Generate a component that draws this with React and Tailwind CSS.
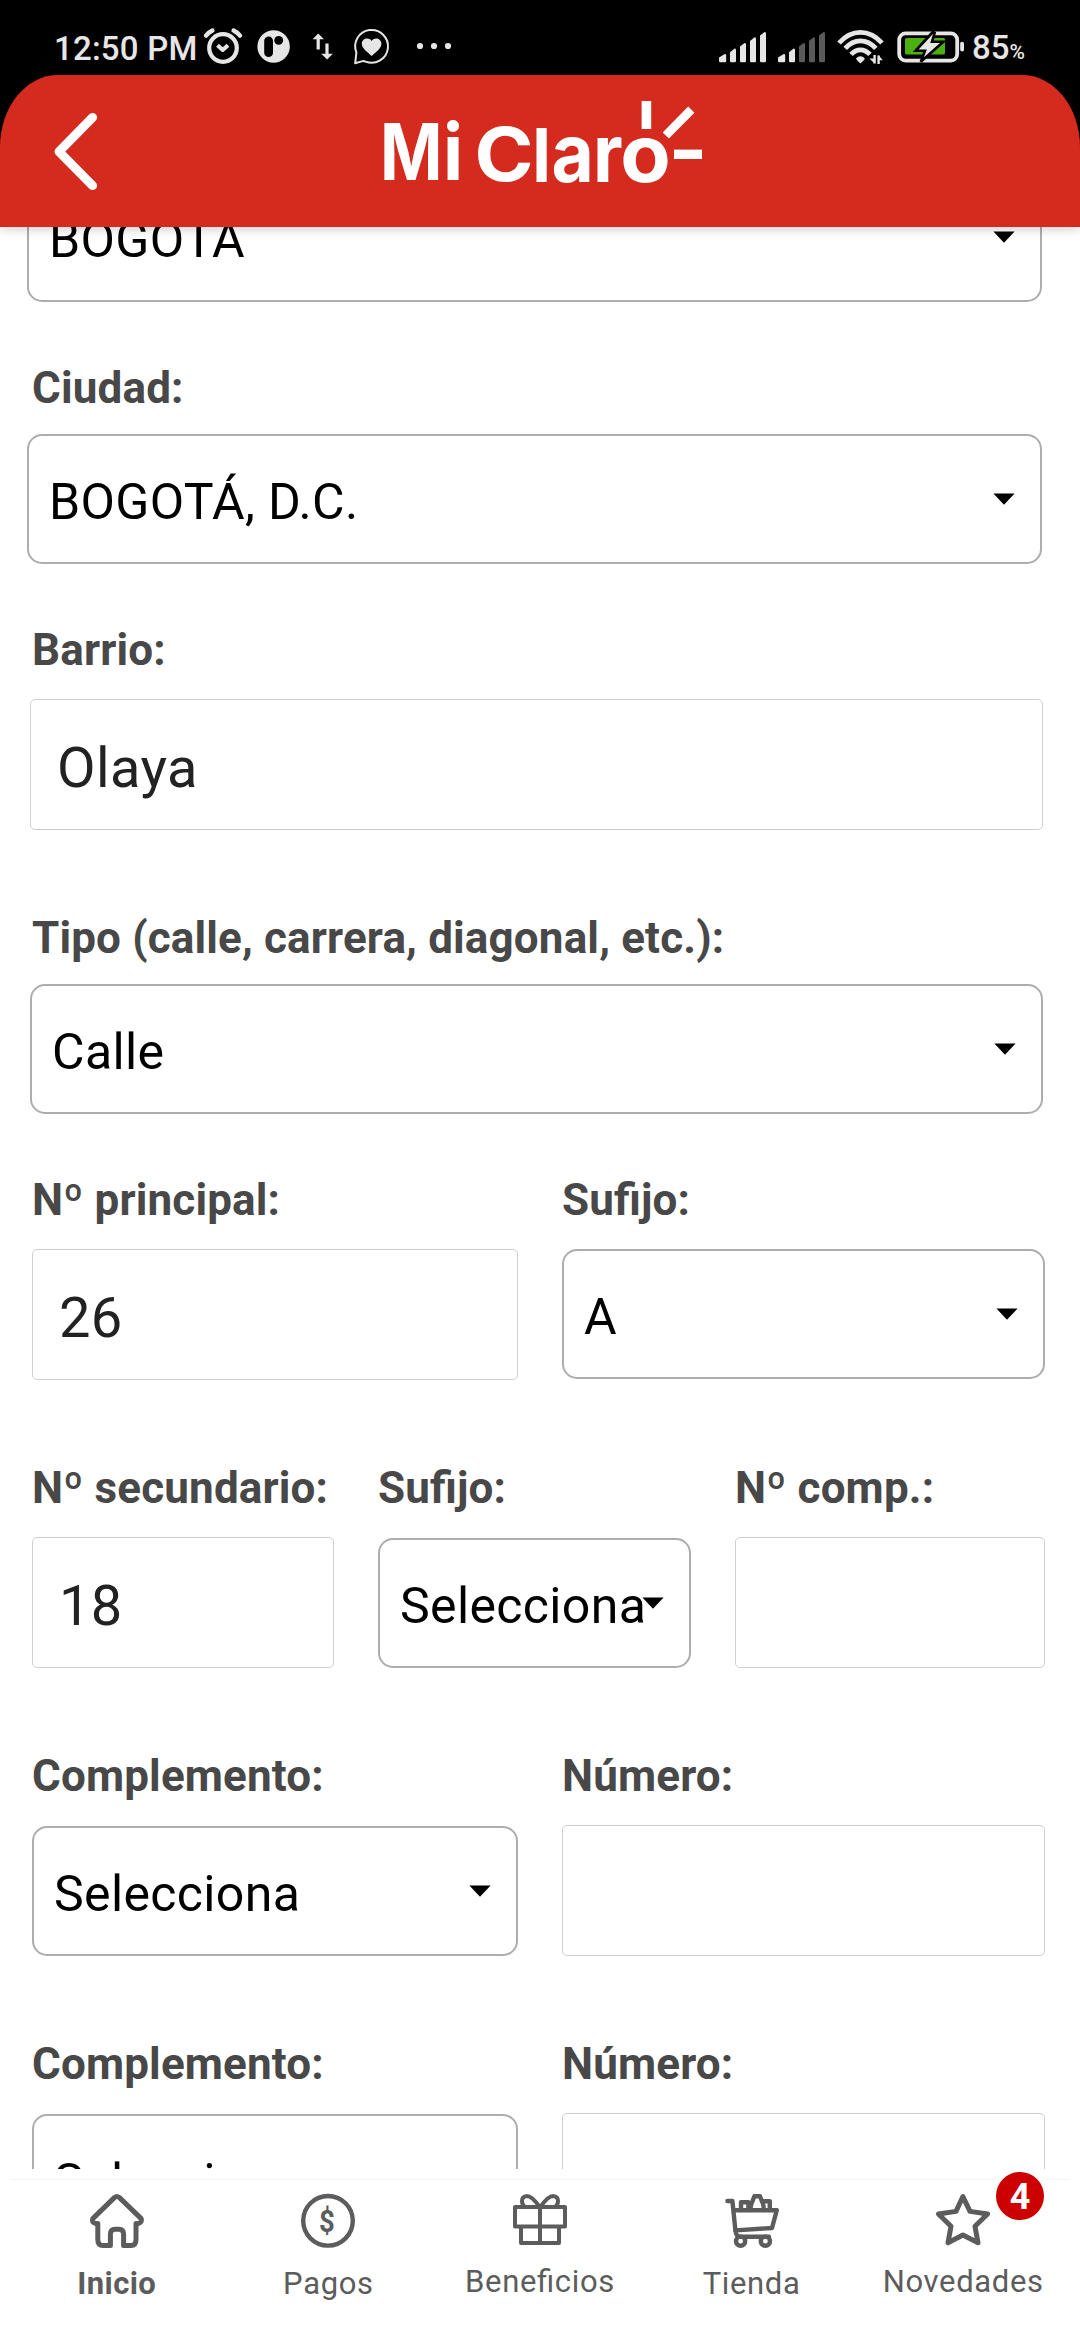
import React from "react";

const GREY = "#5c5c5c";
const LIGHT = "#e6e6e6";

/* ---------- Status bar ---------- */

function AlarmIcon() {
  return (
    <svg width="50" height="75" viewBox="200 0 50 75" fill="none" stroke={LIGHT} strokeLinecap="round">
      <circle cx="223" cy="48" r="13.8" strokeWidth="4.2" />
      <path d="M217.5 45.2 L222.7 50 L228 45.2" strokeWidth="4" strokeLinecap="butt" strokeLinejoin="round" />
      <path d="M206 35.6 Q208.5 32.4 212.4 30.6 M240 35.6 Q237.5 32.4 233.6 30.6" strokeWidth="4.4" />
    </svg>
  );
}

function PIcon() {
  return (
    <svg width="54" height="75" viewBox="250 0 54 75">
      <circle cx="273.6" cy="46.5" r="16.2" fill={LIGHT} />
      <rect x="264.2" y="36.5" width="8.8" height="20.6" rx="4.4" fill="#000" />
      <circle cx="278.7" cy="40.4" r="4.4" fill="#000" />
    </svg>
  );
}

function TransferIcon() {
  return (
    <svg width="40" height="75" viewBox="304 0 40 75" fill={LIGHT}>
      <path d="M318.2 33.4 L324 39.3 H319.8 V49.4 H316.6 V39.3 H312.6 Z" />
      <path d="M327.1 59.6 L321.2 53.8 H325.4 V43.6 H328.6 V53.8 H332.8 Z" />
    </svg>
  );
}

function ChatHeartIcon() {
  return (
    <svg width="60" height="75" viewBox="344 0 60 75">
      <path
        d="M355.2 63.2 L356.4 52.5 A16.4 16.4 0 1 1 365.6 61.6 Q363.4 60.4 361.6 61.4 Z"
        fill="none"
        stroke={LIGHT}
        strokeWidth="2"
        strokeLinejoin="round"
      />
      <path
        d="M371.7 56 C368 52.6 361.8 48.6 361.8 43.8 C361.8 38.6 368.6 36.6 371.7 41 C374.8 36.6 381.4 38.6 381.4 43.8 C381.4 48.6 375.4 52.6 371.7 56 Z"
        fill={LIGHT}
      />
    </svg>
  );
}

function DotsIcon() {
  return (
    <svg width="60" height="75" viewBox="404 0 60 75" fill={LIGHT}>
      <circle cx="420" cy="46" r="3.1" />
      <circle cx="434" cy="46" r="3.1" />
      <circle cx="448" cy="46" r="3.1" />
    </svg>
  );
}

const BARS = [
  [719, 7.2, 54],
  [730, 6, 48.6],
  [740, 6, 43],
  [750, 6, 37.3],
  [760, 6, 32],
];

function SignalIcon({ level }) {
  return (
    <svg width="59" height="75" viewBox="712 0 59 75">
      {BARS.map(([x, w, top], i) => (
        <path
          key={x}
          d={`M${x} 61 V${top + 3.6} L${x + w - 1.4} ${top} Q${x + w} ${top} ${x + w} ${top + 1.4} V61 Q${x + w} 62.2 ${x + w - 1.2} 62.2 H${x + 1.2} Q${x} 62.2 ${x} 61 Z`}
          fill={i < level ? LIGHT : "#5a5a5a"}
        />
      ))}
    </svg>
  );
}

function WifiIcon() {
  return (
    <svg width="60" height="75" viewBox="830 0 60 75" fill="none" stroke={LIGHT}>
      <path d="M839 43 Q848.5 32.4 860.4 32.4 Q872.4 32.4 882 43" strokeWidth="4.8" />
      <path d="M845.2 48.4 Q852 40.9 860.4 40.9 Q869 40.9 875.8 48.4" strokeWidth="4.8" />
      <path d="M851 54.4 Q855.4 49.8 860.4 49.8 Q865.6 49.8 870 54.4" strokeWidth="4.8" />
      <path d="M855.9 58.6 Q860.4 53.8 864.9 58.6 Q863.6 61.4 860.4 63.4 Q857.2 61.4 855.9 58.6 Z" fill={LIGHT} stroke="none" />
      <path d="M874.6 55 V63.4 M878.6 64 V55.6" strokeWidth="2.4" />
      <path d="M874.6 63.6 L869.4 58.4 H874.6 Z M878.6 55.2 L882.8 60.2 H878.6 Z" fill={LIGHT} stroke="none" />
    </svg>
  );
}

function BatteryIcon() {
  return (
    <svg width="80" height="75" viewBox="890 0 80 75">
      <rect x="899.2" y="33.4" width="58" height="27.2" rx="6.4" fill="none" stroke={LIGHT} strokeWidth="3.8" />
      <rect x="905" y="38" width="40" height="16.4" rx="1.5" fill="#4cb110" />
      <rect x="960.2" y="41.8" width="3.8" height="9.8" rx="1.8" fill={LIGHT} />
      <path
        d="M932.8 32 L915.6 50.8 H925 L920.8 61.8 L943.4 41.8 H932 L934.6 33 Z"
        fill={LIGHT}
        stroke="#000"
        strokeWidth="2.6"
        strokeLinejoin="miter"
      />
    </svg>
  );
}

function StatusBar() {
  return (
    <div className="flex h-[75px] justify-between bg-black pl-[54px] pr-[52px] text-[#e6e6e6]">
      <div className="flex">
        <span className="w-[146px] whitespace-nowrap pt-[29px] text-[33px] font-medium leading-[40px] tracking-[0.2px]">12:50 PM</span>
        <AlarmIcon />
        <PIcon />
        <TransferIcon />
        <ChatHeartIcon />
        <DotsIcon />
      </div>
      <div className="flex">
        <SignalIcon level={5} />
        <SignalIcon level={2} />
        <WifiIcon />
        <BatteryIcon />
        <span className="flex w-[58px] items-baseline whitespace-nowrap pl-[2px] pt-[28px] text-[33px] font-medium leading-[40px]">
          85<span className="text-[21px]">%</span>
        </span>
      </div>
    </div>
  );
}

/* ---------- Header ---------- */

const LOGO = [
  ["M", 380, 180, 78, 0.86],
  ["i", 443, 180, 78, 0.95],
  ["C", 474.6, 181.2, 74, 1.08],
  ["l", 532.3, 182, 74, 0.93],
  ["a", 551.6, 181.6, 81, 0.9],
  ["r", 593, 182, 81, 0.9],
  ["o", 620.2, 181.6, 80, 1.03],
];

function Logo() {
  return (
    <svg width="340" height="110" viewBox="370 90 340 110" fill="#fff" className="overflow-visible">
      <g style={{ fontFamily: "Inter, sans-serif", fontWeight: 700 }}>
        {LOGO.map(([ch, x, y, size, sx]) => (
          <text key={ch} fontSize={size} transform={`translate(${x} ${y}) scale(${sx} 1)`}>
            {ch}
          </text>
        ))}
      </g>
      <rect x="641.6" y="101" width="9.6" height="28" />
      <path d="M665.8 135.5 L691.3 109.7" stroke="#fff" strokeWidth="8.8" />
      <rect x="674" y="149.6" width="28" height="9.4" />
    </svg>
  );
}

function Header() {
  return (
    <div className="bg-black">
      <header className="relative z-10 flex h-[152px] rounded-t-[58px_72px] bg-[#d52b1e] pt-[15px] shadow-[0_2px_12px_rgba(0,0,0,0.2)]">
        <svg width="370" height="110" viewBox="0 90 370 110" fill="none" stroke="#fff" strokeWidth="9" strokeLinecap="round" strokeLinejoin="round">
          <path d="M92.6 117.4 L59 151.6 L92.6 185.6" />
        </svg>
        <Logo />
      </header>
    </div>
  );
}

/* ---------- Form ---------- */

function Label({ children }) {
  return (
    <div className="h-[52px] whitespace-nowrap text-[44px] font-bold leading-[52px] tracking-[0.15px] text-[#484848] [font-feature-settings:'liga'_1]">
      {children}
    </div>
  );
}

function Select({ value, className = "" }) {
  return (
    <div className={`relative h-[130px] rounded-[15px] border-2 border-[#adadad] pl-[20px] pt-[37px] ${className}`}>
      <div className="whitespace-nowrap text-[50px] leading-[58px] tracking-[0.35px] text-black">{value}</div>
      <svg className="absolute right-[25px] top-[57px]" width="22" height="12" viewBox="0 0 22 12">
        <path d="M0.4 0.4 H21.6 L11 11.8 Z" fill="#000" />
      </svg>
    </div>
  );
}

function Input({ value, className = "" }) {
  return (
    <div className={`h-[131px] whitespace-nowrap rounded-[5px] border border-[#cfcfcf] pl-[26px] pt-[36px] text-[56px] leading-[64px] tracking-[0.4px] text-[#222] ${className}`}>
      {value}
    </div>
  );
}

function Form() {
  return (
    <main className="h-[1942px] overflow-hidden bg-white">
      <div className="-mt-[55px] pl-[32px] pr-[35px]">
        <Select value="BOGOTA" className="-ml-[5px] mr-[3px]" />
        <div className="mt-[60px]">
          <Label>Ciudad:</Label>
          <Select value="BOGOTÁ, D.C." className="-ml-[5px] mr-[3px] mt-[20px]" />
        </div>
        <div className="mt-[60px]">
          <Label>Barrio:</Label>
          <Input value="Olaya" className="-ml-[2px] mr-[2px] mt-[23px]" />
        </div>
        <div className="mt-[82px]">
          <Label>Tipo (calle, carrera, diagonal, etc.):</Label>
          <Select value="Calle" className="-ml-[2px] mr-[2px] mt-[20px]" />
        </div>
        <div className="mt-[60px] grid grid-cols-[486px_483px] gap-x-[44px]">
          <div>
            <Label>Nº principal:</Label>
            <Input value="26" className="mt-[23px]" />
          </div>
          <div>
            <Label>Sufijo:</Label>
            <Select value="A" className="mt-[23px]" />
          </div>
        </div>
        <div className="mt-[82px] grid grid-cols-[302px_313px_310px] gap-x-[44px]">
          <div>
            <Label>Nº secundario:</Label>
            <Input value="18" className="mt-[23px]" />
          </div>
          <div>
            <Label>Sufijo:</Label>
            <Select value="Selecciona" className="mt-[24px]" />
          </div>
          <div>
            <Label>Nº comp.:</Label>
            <Input className="mt-[23px]" />
          </div>
        </div>
        {[1, 2].map((n) => (
          <div key={n} className="mt-[82px] grid h-[206px] grid-cols-[486px_483px] gap-x-[44px]">
            <div>
              <Label>Complemento:</Label>
              <Select value="Selecciona" className="mt-[24px]" />
            </div>
            <div>
              <Label>Número:</Label>
              <Input className="mt-[23px]" />
            </div>
          </div>
        ))}
      </div>
    </main>
  );
}

/* ---------- Bottom navigation ---------- */

function HomeIcon() {
  return (
    <svg width="60" height="60" viewBox="87 2190 60 60" fill="none" stroke={GREY} strokeWidth="5" strokeLinejoin="round" strokeLinecap="round">
      <path d="M97.8 2223.5 H95.4 Q91.2 2222 92.8 2218.6 L114.6 2197.4 Q116.9 2195.6 119.2 2197.4 L141.2 2218.6 Q142.6 2222 138.4 2223.5 H136 V2239.4 Q136 2245.4 131 2245.4 H123.6 V2234.4 Q123.6 2229.2 119 2229.2 H115 Q110.4 2229.2 110.4 2234.4 V2245.4 H103 Q97.8 2245.4 97.8 2239.4 Z" />
    </svg>
  );
}

function CoinIcon() {
  return (
    <svg width="60" height="60" viewBox="298 2190 60 60">
      <circle cx="328" cy="2220.8" r="24.8" fill="none" stroke={GREY} strokeWidth="4.4" />
      <text x="327" y="2231.6" textAnchor="middle" fontSize="32" fill={GREY} transform="translate(327 0) scale(0.86 1) translate(-327 0)" style={{ fontFamily: "Roboto, sans-serif", fontWeight: 700 }}>
        $
      </text>
    </svg>
  );
}

function GiftIcon() {
  return (
    <svg width="60" height="60" viewBox="510 2190 60 60" fill="none" stroke={GREY} strokeWidth="4" strokeLinejoin="round">
      <rect x="515" y="2207" width="50" height="19.6" />
      <path d="M521 2226.6 V2243 H559 V2226.6 M540 2207 V2243" />
      <path d="M539.6 2207 Q532 2196 527 2196 Q522 2196.4 522 2201 Q522 2204.6 524.6 2207" />
      <path d="M540.4 2207 Q548 2196 553 2196 Q558 2196.4 558 2201 Q558 2204.6 555.4 2207" />
    </svg>
  );
}

function CartIcon() {
  return (
    <svg width="60" height="60" viewBox="721 2190 60 60" fill="none" stroke={GREY} strokeWidth="4.4" strokeLinejoin="round" strokeLinecap="round">
      <path d="M726.4 2201 H731.4 L734.4 2230.4 L771 2228 L775.8 2210.2 H732.8" />
      <path d="M734.4 2230.4 Q735 2236.6 739 2236.8 H768" />
      <circle cx="739.6" cy="2241.2" r="4.6" />
      <circle cx="764.4" cy="2241.2" r="4.6" />
      <path d="M740 2210 V2202.2 H747.4 V2210 M749.6 2210 Q749.6 2204 751.4 2201.6 L753.4 2196.2 H759 L761 2201.6 Q762.6 2204 762.8 2210 M763 2201.2 H768.8 V2210" />
    </svg>
  );
}

function StarIcon() {
  return (
    <svg width="60" height="60" viewBox="933 2190 60 60" fill="none" stroke={GREY} strokeWidth="5" strokeLinejoin="round">
      <path d="M962.9 2196.6 L970 2211.4 L987.6 2214 L975 2226.2 L978 2242.8 L962.9 2235 L948 2242.8 L951 2226.2 L938.4 2214 L956 2211.4 Z" />
    </svg>
  );
}

const NAV = [
  { label: "Inicio", Icon: HomeIcon, text: "mt-[14px] font-bold tracking-[0.4px]" },
  { label: "Pagos", Icon: CoinIcon, text: "mt-[14px] tracking-[0.65px]" },
  { label: "Beneficios", Icon: GiftIcon, text: "mt-[12px] tracking-[0.65px]" },
  { label: "Tienda", Icon: CartIcon, text: "mt-[14px] tracking-[0.65px]" },
  { label: "Novedades", Icon: StarIcon, text: "mt-[12px] tracking-[0.65px]", badge: 4 },
];

function BottomNav() {
  return (
    <nav className="h-[171px] bg-white px-[11px] pt-[10px]">
      <div className="grid grid-cols-5 border-t border-[#f3f3f3] pt-[10px]">
        {NAV.map(({ label, Icon, text, badge }) => (
          <div key={label} className="relative flex flex-col items-center">
            <Icon />
            <span className={`whitespace-nowrap text-[31px] leading-[40px] text-[#5c5c5c] [font-feature-settings:'liga'_1] ${text}`}>{label}</span>
            {badge && (
              <span className="absolute -top-[18px] right-[25px] flex h-[48px] w-[48px] items-center justify-center rounded-full bg-[#cc0000] pt-[2px] text-[36px] font-bold leading-none text-white shadow-[0_0_0_3px_#fff]">
                {badge}
              </span>
            )}
          </div>
        ))}
      </div>
    </nav>
  );
}

export default function App() {
  return (
    <div className="h-[2340px] w-[1080px] overflow-hidden bg-white font-['Roboto',sans-serif]">
      <StatusBar />
      <Header />
      <Form />
      <BottomNav />
    </div>
  );
}
